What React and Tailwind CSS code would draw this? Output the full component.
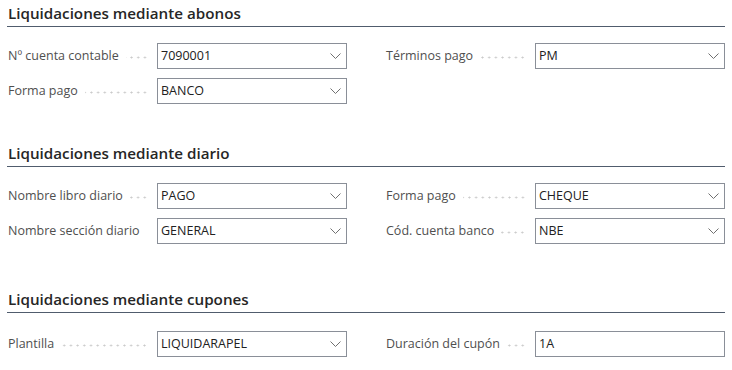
import React from "react";

// field sections of the settlement setup page
const sections = [
  {
    title: "Liquidaciones mediante abonos",
    top: "mt-0",
    gap: "mt-[16px]",
    fields: [
      { label: "Nº cuenta contable", value: "7090001", lookup: true },
      { label: "Términos pago", value: "PM", lookup: true },
      { label: "Forma pago", value: "BANCO", lookup: true },
    ],
  },
  {
    title: "Liquidaciones mediante diario",
    top: "mt-[36px]",
    gap: "mt-[16px]",
    fields: [
      { label: "Nombre libro diario", value: "PAGO", lookup: true },
      { label: "Forma pago", value: "CHEQUE", lookup: true },
      { label: "Nombre sección diario", value: "GENERAL", lookup: true },
      { label: "Cód. cuenta banco", value: "NBE", lookup: true },
    ],
  },
  {
    title: "Liquidaciones mediante cupones",
    top: "mt-[42px]",
    gap: "mt-[18px]",
    fields: [
      { label: "Plantilla", value: "LIQUIDARAPEL", lookup: true },
      { label: "Duración del cupón", value: "1A", lookup: false },
    ],
  },
];

const Chevron = () => (
  <svg width="11" height="6" viewBox="0 0 11 6" fill="none" className="shrink-0">
    <path d="M0.5 0.5 L5.5 5.5 L10.5 0.5" stroke="#707070" strokeWidth="1" />
  </svg>
);

const Field = ({ label, value, lookup }) => (
  <div className="flex items-center h-[26px]">
    {/* label + dotted leader */}
    <div className="flex items-center w-[150px] pl-[1px] pr-[9px] shrink-0">
      <span className="text-[12.5px] text-[#4f4f4f] whitespace-nowrap">{label}</span>
      <span className="flex-1 h-[3px] ml-[7px] mt-[3px] bg-[radial-gradient(circle,#cacaca_0.9px,transparent_1.1px)] bg-[length:6.7px_3px] bg-right bg-repeat-x" />
    </div>
    <div className="flex-1 h-[26px] flex items-center border border-[#8a8f98] bg-white pl-[3px] pr-[5px]">
      <span className="flex-1 text-[12.5px] text-[#212121]">{value}</span>
      {lookup && <Chevron />}
    </div>
  </div>
);

const App = () => {
  return (
    <div className="w-[732px] h-[370px] bg-white px-[7px] font-['Open_Sans',sans-serif] overflow-hidden">
      {sections.map((s) => (
        <div key={s.title} className={s.top}>
          <h2 className="pt-[2px] pb-[2px] leading-[22px] text-[15.2px] font-semibold text-[#262626] pl-[1px] border-b border-[#505c6d]">
            {s.title}
          </h2>
          <div className={`grid grid-cols-2 gap-x-[38px] gap-y-[9px] ${s.gap}`}>
            {s.fields.map((f, i) => (
              <Field key={i} {...f} />
            ))}
          </div>
        </div>
      ))}
    </div>
  );
};

export default App;
